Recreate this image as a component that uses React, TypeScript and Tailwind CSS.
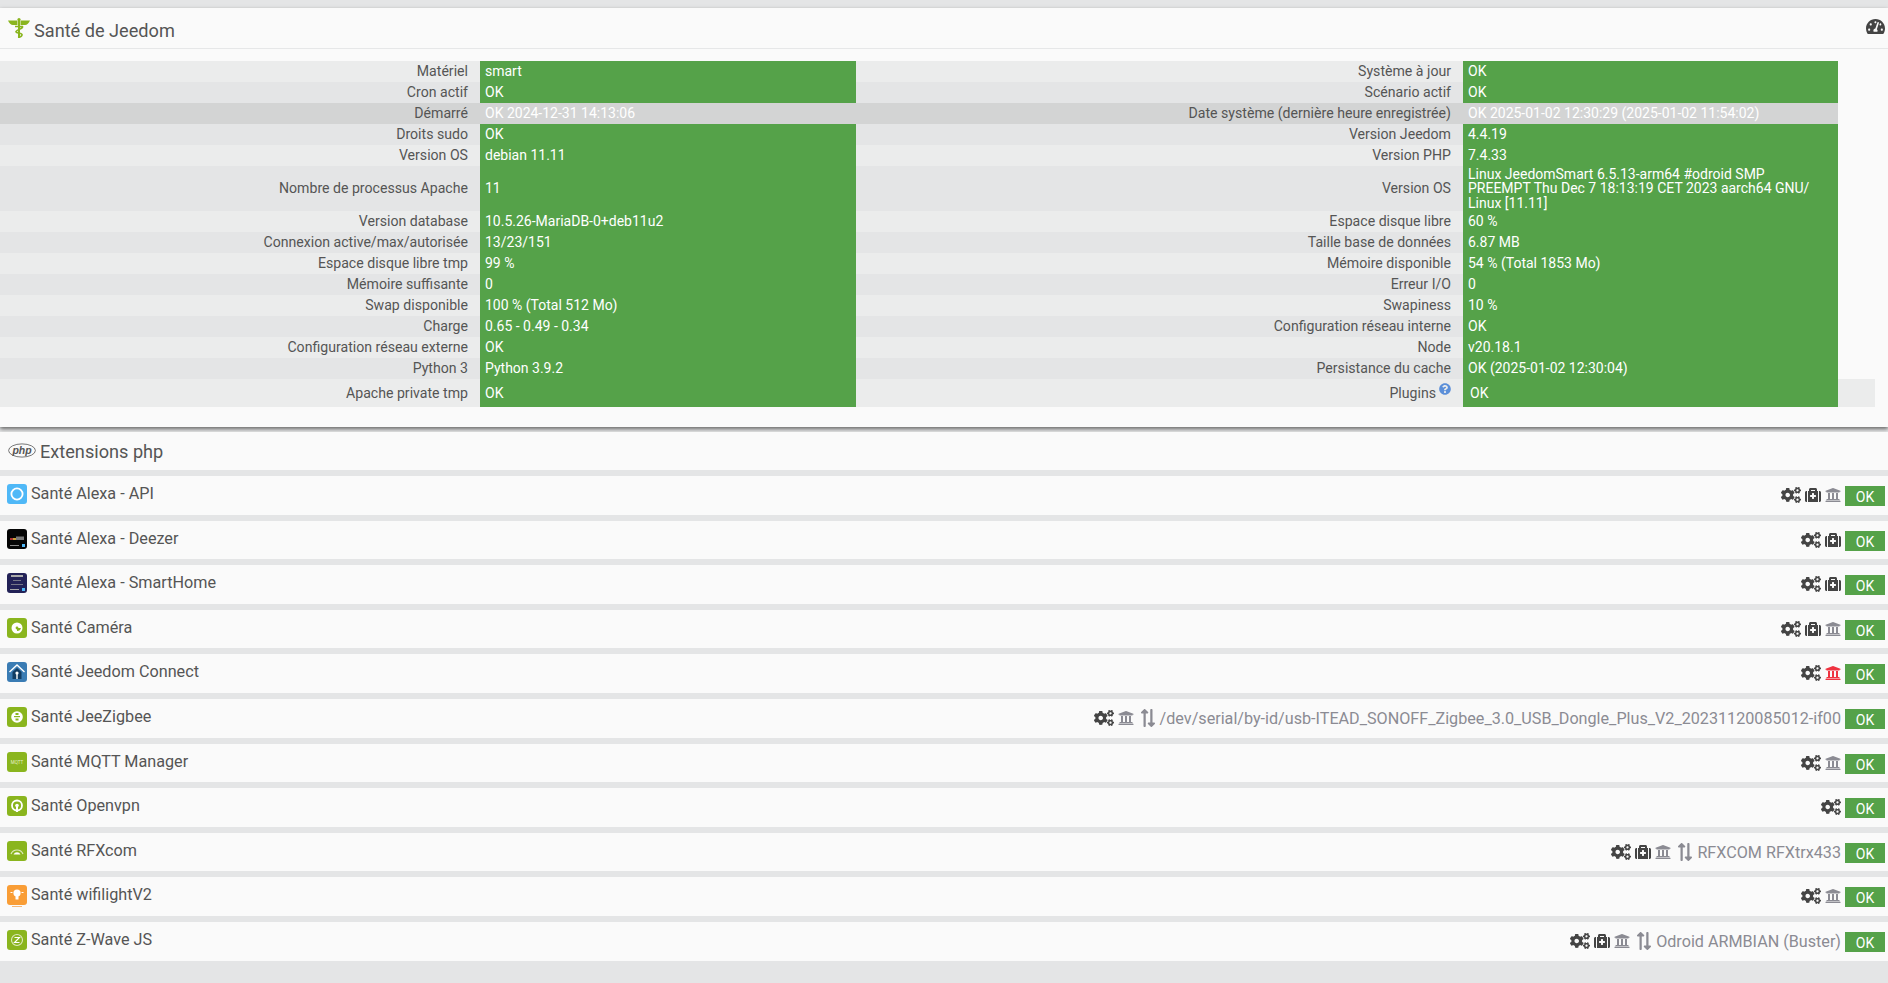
import { FaCogs, FaExchangeAlt, FaMedkit, FaQuestionCircle, FaTachometerAlt, FaUniversity } from 'react-icons/fa';

const leftRows = [
    ['Matériel', 'smart'],
    ['Cron actif', 'OK'],
    ['Démarré', 'OK 2024-12-31 14:13:06'],
    ['Droits sudo', 'OK'],
    ['Version OS', 'debian 11.11'],
    ['Nombre de processus Apache', '11'],
    ['Version database', '10.5.26-MariaDB-0+deb11u2'],
    ['Connexion active/max/autorisée', '13/23/151'],
    ['Espace disque libre tmp', '99 %'],
    ['Mémoire suffisante', '0'],
    ['Swap disponible', '100 % (Total 512 Mo)'],
    ['Charge', '0.65 - 0.49 - 0.34'],
    ['Configuration réseau externe', 'OK'],
    ['Python 3', 'Python 3.9.2'],
    ['Apache private tmp', 'OK'],
];

const rightRows = [
    ['Système à jour', 'OK'],
    ['Scénario actif', 'OK'],
    ['Date système (dernière heure enregistrée)', 'OK 2025-01-02 12:30:29 (2025-01-02 11:54:02)'],
    ['Version Jeedom', '4.4.19'],
    ['Version PHP', '7.4.33'],
    // zero width space: the line breaks right after the slash
    ['Version OS', 'Linux JeedomSmart 6.5.13-arm64 #odroid SMP PREEMPT Thu Dec 7 18:13:19 CET 2023 aarch64 GNU/\u200BLinux [11.11]'],
    ['Espace disque libre', '60 %'],
    ['Taille base de données', '6.87 MB'],
    ['Mémoire disponible', '54 % (Total 1853 Mo)'],
    ['Erreur I/O', '0'],
    ['Swapiness', '10 %'],
    ['Configuration réseau interne', 'OK'],
    ['Node', 'v20.18.1'],
    ['Persistance du cache', 'OK (2025-01-02 12:30:04)'],
    ['Plugins', 'OK'],
];

function PluginIcon({ name }: { name: string }) {
    if (name === 'alexa') {
        return (
            <svg viewBox="0 0 20 20" className="w-5 h-5 shrink-0">
                <rect width="20" height="20" rx="3" fill="#4fb8f7" />
                <circle cx="10" cy="10" r="5.6" fill="none" stroke="#fff" strokeWidth="1.8" />
            </svg>
        );
    }
    if (name === 'deezer') {
        return (
            <svg viewBox="0 0 20 20" className="w-5 h-5 shrink-0">
                <rect width="20" height="20" rx="3" fill="#050505" />
                <rect x="3" y="9" width="3" height="2" fill="#a33" />
                <rect x="6" y="9" width="3" height="2" fill="#c9a23a" />
                <rect x="9" y="7.5" width="8" height="3.5" fill="#777" />
                <rect x="3" y="16" width="9" height="1" fill="#888" />
                <rect x="15" y="15" width="3" height="3" fill="#4fb8f7" />
            </svg>
        );
    }
    if (name === 'smarthome') {
        return (
            <svg viewBox="0 0 20 20" className="w-5 h-5 shrink-0">
                <rect width="20" height="20" rx="3" fill="#232257" />
                <rect x="4" y="2" width="12" height="2" fill="#aaa" />
                <rect x="6" y="7" width="8" height="1" fill="#778" />
                <rect x="4" y="11" width="12" height="1" fill="#778" />
                <rect x="3" y="16" width="9" height="1" fill="#aaa" />
                <rect x="15" y="15" width="3" height="3" fill="#4fb8f7" />
            </svg>
        );
    }
    if (name === 'connect') {
        return (
            <svg viewBox="0 0 20 20" className="w-5 h-5 shrink-0">
                <rect width="20" height="20" rx="3" fill="#3a7cb4" />
                <path d="M2.5 10 L10 3 L17.5 10" fill="none" stroke="#fff" strokeWidth="1.4" />
                <path d="M5.5 10 L10 6 L14.5 10 V17 H5.5 Z" fill="#123d63" />
                <circle cx="10" cy="11" r="1.6" fill="#fff" />
                <rect x="9.3" y="12" width="1.4" height="5" fill="#fff" />
            </svg>
        );
    }
    if (name === 'wifilight') {
        return (
            <svg viewBox="0 0 20 23" className="w-5 h-[23px] shrink-0">
                <rect width="20" height="20" rx="3" fill="#f99d36" />
                <circle cx="10" cy="8" r="3.6" fill="#fff" />
                <rect x="8.5" y="10.5" width="3" height="4" fill="#fff" />
                <rect x="3.5" y="7" width="2" height="1" fill="#fff" />
                <rect x="14.5" y="7" width="2" height="1" fill="#fff" />
                <rect x="5" y="21" width="10" height="1" fill="#f5b778" />
            </svg>
        );
    }
    return (
        <svg viewBox="0 0 20 20" className="w-5 h-5 shrink-0">
            <rect width="20" height="20" rx="3" fill="#8ab51e" />
            {name === 'camera' && (
                <>
                    <circle cx="10" cy="10" r="5.5" fill="#fff" />
                    <path d="M10 10 H14 A4 4 0 0 1 10 13 Z" fill="#8ab51e" />
                    <circle cx="10" cy="10" r="1.4" fill="#8ab51e" />
                </>
            )}
            {name === 'zigbee' && (
                <>
                    <circle cx="10" cy="10" r="5.8" fill="#fff" />
                    <rect x="7" y="9" width="6" height="1.2" fill="#8ab51e" />
                    <rect x="8.5" y="6" width="3" height="2" fill="#8ab51e" />
                    <rect x="8.5" y="11.5" width="3" height="2" fill="#8ab51e" />
                </>
            )}
            {name === 'mqtt' && (
                <text x="10" y="11.5" textAnchor="middle" fontSize="4.5" fill="#e6f0c8" fontFamily="'Roboto', sans-serif">
                    MQTT
                </text>
            )}
            {name === 'openvpn' && (
                <>
                    <circle cx="10" cy="9.5" r="5" fill="none" stroke="#fff" strokeWidth="1.8" />
                    <circle cx="10" cy="9.5" r="1.8" fill="#fff" />
                    <rect x="9" y="10" width="2" height="6" fill="#fff" />
                </>
            )}
            {name === 'rfx' && (
                <>
                    <path d="M4 13 A6.5 6.5 0 0 1 16 13" fill="none" stroke="#dfe9c0" strokeWidth="1.2" />
                    <path d="M6.5 13.5 A3.8 3.8 0 0 1 13.5 13.5 Z" fill="#fff" />
                </>
            )}
            {name === 'zwave' && (
                <>
                    <circle cx="10" cy="10" r="5.5" fill="none" stroke="#dfe9c0" strokeWidth="1.1" />
                    <path d="M7.5 7.5 H12.5 L7.5 12.5 H12.5" fill="none" stroke="#fff" strokeWidth="1.1" />
                </>
            )}
        </svg>
    );
}

const plugins = [
    { name: 'Santé Alexa - API', icon: 'alexa', cogs: true, medkit: true, bank: 'gray' },
    { name: 'Santé Alexa - Deezer', icon: 'deezer', cogs: true, medkit: true },
    { name: 'Santé Alexa - SmartHome', icon: 'smarthome', cogs: true, medkit: true },
    { name: 'Santé Caméra', icon: 'camera', cogs: true, medkit: true, bank: 'gray' },
    { name: 'Santé Jeedom Connect', icon: 'connect', cogs: true, bank: 'red' },
    { name: 'Santé JeeZigbee', icon: 'zigbee', cogs: true, bank: 'gray', port: '/dev/serial/by-id/usb-ITEAD_SONOFF_Zigbee_3.0_USB_Dongle_Plus_V2_20231120085012-if00' },
    { name: 'Santé MQTT Manager', icon: 'mqtt', cogs: true, bank: 'gray' },
    { name: 'Santé Openvpn', icon: 'openvpn', cogs: true },
    { name: 'Santé RFXcom', icon: 'rfx', cogs: true, medkit: true, bank: 'gray', port: 'RFXCOM RFXtrx433' },
    { name: 'Santé wifilightV2', icon: 'wifilight', cogs: true, bank: 'gray' },
    { name: 'Santé Z-Wave JS', icon: 'zwave', cogs: true, medkit: true, bank: 'gray', port: 'Odroid ARMBIAN (Buster)' },
];

function PhpLogo() {
    return (
        <svg viewBox="0 0 28 15" className="w-7 h-[15px] shrink-0 mb-1">
            <ellipse cx="14" cy="7.5" rx="13.4" ry="6.6" fill="none" stroke="#555" strokeWidth="0.8" />
            <text x="14" y="10.5" textAnchor="middle" fontSize="10.5" fontWeight="700" fontStyle="italic" fill="#555" fontFamily="'Liberation Sans', sans-serif">php</text>
        </svg>
    );
}

function CaduceusIcon() {
    return (
        <svg viewBox="0 0 22 20" className="w-[22px] h-5 shrink-0 mb-1">
            <path d="M0 2.5 H9.5 V7 H5 C3 7 1 5 0 2.5 Z M22 2.5 H12.5 V7 H17 C19 7 21 5 22 2.5 Z" fill="#8ab51e" />
            <circle cx="11" cy="1.6" r="1.6" fill="#8ab51e" />
            <rect x="10" y="1" width="2" height="19" fill="#8ab51e" />
            <path d="M7 8.5 H14.5 C15.5 10.5 9 11.5 8 13.5 C7.5 15 13 15 14 16.5 C14.2 18 12.5 19 10 19.5" fill="none" stroke="#8ab51e" strokeWidth="1.6" />
        </svg>
    );
}

function TableRow({ index, left, right }: { index: number; left: string[]; right: string[] }) {
    const isGrey = index === 2;
    const isLast = index === leftRows.length - 1;
    const zebra = isGrey ? 'bg-[#d3d4d4]' : index % 2 === 0 ? 'bg-[#ebecec]' : 'bg-[#e4e5e6]';
    const label = `${zebra} pr-3 py-px text-right text-[14.12px] leading-[14.3px]`;
    const value = `pl-[5px] pr-4 py-px text-sm leading-[14.3px] text-white ${isGrey ? 'bg-[#d3d4d4]' : 'bg-[#55a249]'}`;
    const height = isLast ? 'h-[28px]' : 'h-[21px]';

    return (
        <tr className={height}>
            <td className={label}>{left[0]}</td>
            <td className={value}>{left[1]}</td>
            <td className={label}>
                {right[0]}
                {isLast && <FaQuestionCircle className="inline-block relative -top-[5px] w-3 h-3 ml-[3px] text-[#5b8fd9]" />}
            </td>
            <td className={`${value} ${isLast ? 'pl-[7px]' : ''}`}>{right[1]}</td>
            {isLast && <td className="bg-[#ebecec]"></td>}
        </tr>
    );
}

export default function App() {
    return (
        <div className="min-h-[983px] bg-[#e4e5e6] pt-2 text-[#555] font-['Roboto',sans-serif]">
            <section className="h-[419px] bg-[#fafafa] shadow-[0_2px_4px_#666]">
                <header className="h-[41px] border-b border-[#e6e7e8] flex items-center justify-between pl-2 pr-[3px]">
                    <h1 className="flex items-center gap-1 pt-[5px] text-[18.15px]">
                        <CaduceusIcon />
                        Santé de Jeedom
                    </h1>
                    <FaTachometerAlt className="w-[19px] h-[17px] mb-1 text-[#444]" />
                </header>
                <table className="mt-3 w-[1875px] table-fixed border-collapse">
                    <colgroup>
                        <col className="w-[480px]" />
                        <col className="w-[376px]" />
                        <col className="w-[607px]" />
                        <col className="w-[375px]" />
                        <col className="w-[37px]" />
                    </colgroup>
                    <tbody>
                        {leftRows.map((left, i) => (
                            <TableRow key={left[0]} index={i} left={left} right={rightRows[i]} />
                        ))}
                    </tbody>
                </table>
            </section>

            <section className="mt-[5px] h-[38px] bg-[#fafafa] flex items-center gap-1 pl-2 pt-[2px] text-[18.15px]">
                <PhpLogo />
                Extensions php
            </section>

            <div className="mt-1.5 flex flex-col gap-1.5">
                {plugins.map((p) => (
                    <div key={p.name} className="h-[38.6px] bg-[#fafafa] flex justify-between pl-[7px] pr-[3px]">
                        <div className="flex items-start gap-1 pt-[6px] text-[16.2px]">
                            <span className="mt-[2px]">
                                <PluginIcon name={p.icon} />
                            </span>
                            {p.name}
                        </div>
                        <div className="flex items-start pt-2.5">
                            {p.cogs && <FaCogs className="w-5 h-4 mt-px text-[#444]" />}
                            {p.medkit && <FaMedkit className="w-4 h-4 mt-px ml-1 text-[#444]" />}
                            {p.bank && (
                                <FaUniversity className={`w-4 h-4 mt-px ml-1 ${p.bank === 'red' ? 'text-[#ef3340]' : 'text-[#8b8b93]'}`} />
                            )}
                            {p.port && (
                                <>
                                    <FaExchangeAlt className="w-[18px] h-[18px] ml-[5px] rotate-90 text-[#8b8b93]" />
                                    <span className="ml-[3px] text-[16.17px] leading-5 text-[#8b8b93]">{p.port}</span>
                                </>
                            )}
                            <span className="ml-1 w-10 h-5 bg-[#55a249] text-center text-sm leading-[22px] text-white">OK</span>
                        </div>
                    </div>
                ))}
            </div>
        </div>
    );
}
